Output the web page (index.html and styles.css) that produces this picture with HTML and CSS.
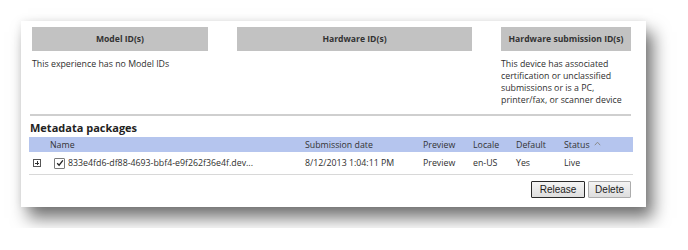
FILE: index.html
```html
<!DOCTYPE html>
<html lang="en">
<head>
    <meta charset="UTF-8">
    <title>Metadata packages</title>
    <link rel="stylesheet" href="styles.css">
</head>
<body>
    <div class="panel">
        <div class="id-columns">
            <div class="id-col">
                <div class="id-head">Model ID(s)</div>
                <p class="id-note">This experience has no Model IDs</p>
            </div>
            <div class="id-col">
                <div class="id-head">Hardware ID(s)</div>
            </div>
            <div class="id-col">
                <div class="id-head">Hardware submission ID(s)</div>
                <p class="id-note">This device has associated certification or unclassified submissions or is a PC, printer/fax, or scanner device</p>
            </div>
        </div>

        <div class="divider"></div>

        <h2 class="section-title">Metadata packages</h2>

        <div class="pkg-table">
            <div class="pkg-row pkg-head">
                <span></span>
                <span>Name</span>
                <span>Submission date</span>
                <span>Preview</span>
                <span>Locale</span>
                <span>Default</span>
                <span>Status <svg class="sort-caret" width="7" height="5" viewBox="0 0 7 5"><path d="M0.8 4.2 L3.5 1.2 L6.2 4.2" fill="none" stroke="#8a8a8a" stroke-width="1"/></svg></span>
            </div>
            <div class="pkg-row">
                <span><span class="expander"></span></span>
                <span class="pkg-name"><span class="check"><svg width="8" height="8" viewBox="0 0 8 8"><path d="M1.2 4.2 L3.1 6.2 L6.9 1.4" fill="none" stroke="#222" stroke-width="1.3"/></svg></span>833e4fd6-df88-4693-bbf4-e9f262f36e4f.dev...</span>
                <span>8/12/2013 1:04:11 PM</span>
                <span>Preview</span>
                <span>en-US</span>
                <span>Yes</span>
                <span>Live</span>
            </div>
        </div>

        <div class="actions">
            <button class="btn btn-focus">Release</button>
            <button class="btn">Delete</button>
        </div>
    </div>
</body>
</html>
```

FILE: styles.css
```css
body {
    margin: 0;
    padding: 21px;
    background-color: #fff;
    font-family: "Open Sans", "Noto Sans", sans-serif;
    font-size: 8.8px;
    color: #2f2f2f;
}
.panel {
    width: 604px;
    padding: 6px 13px 9px 8px;
    background: #fff;
    box-shadow: 7px 11px 16px rgba(0, 0, 0, 0.55), 0 0 8px rgba(0, 0, 0, 0.07);
}
.id-columns {
    display: grid;
    grid-template-columns: 176px 235px 130px;
    column-gap: 29px;
    margin-left: 3px;
}
.id-head {
    height: 24px;
    line-height: 24px;
    text-align: center;
    background-color: #c2c2c2;
    font-weight: bold;
    font-size: 8.6px;
    color: #333;
}
.id-note {
    margin: 7px 0 0 0;
    line-height: 12px;
}
.divider {
    height: 2px;
    margin: 8px 2px 0 1px;
    background-color: #cfcfcf;
}
.section-title {
    margin: 5px 0 2px 1px;
    font-size: 11px;
    line-height: 14px;
    font-weight: bold;
    color: #222;
}
.pkg-row {
    display: grid;
    grid-template-columns: 21px 255px 118px 50px 43px 48px 1fr;
    align-items: center;
    height: 22px;
    border-bottom: 1px solid #d8d8d8;
}
.pkg-head {
    height: 15px;
    background-color: #b5c5ee;
    border-bottom: none;
    color: #333;
}
.sort-caret {
    margin-left: 2px;
    vertical-align: 2px;
}
.expander {
    position: relative;
    display: block;
    width: 6px;
    height: 6px;
    margin-left: 4px;
    border: 1px solid #555;
}
.expander::before, .expander::after {
    content: "";
    position: absolute;
    background: #333;
}
.expander::before {
    left: 1px;
    top: 2.5px;
    width: 4px;
    height: 1px;
}
.expander::after {
    left: 2.5px;
    top: 1px;
    width: 1px;
    height: 4px;
}
.pkg-name {
    display: flex;
    align-items: center;
}
.check {
    display: flex;
    align-items: center;
    justify-content: center;
    width: 9px;
    height: 9px;
    margin: 0 3px 0 4px;
    border: 1px solid #7a7a7a;
    border-radius: 1px;
}
.actions {
    display: flex;
    justify-content: flex-end;
    gap: 3px;
    margin: 6px 2px 0 0;
}
.btn {
    height: 17px;
    padding: 0 6px;
    font-family: "Liberation Sans", Arial, sans-serif;
    font-size: 10px;
    color: #222;
    background: linear-gradient(#f4f4f4, #dedede);
    border: 1px solid #acacac;
    border-radius: 1px;
}
.btn-focus {
    width: 54px;
    border-color: #2a2a2a;
}
```
